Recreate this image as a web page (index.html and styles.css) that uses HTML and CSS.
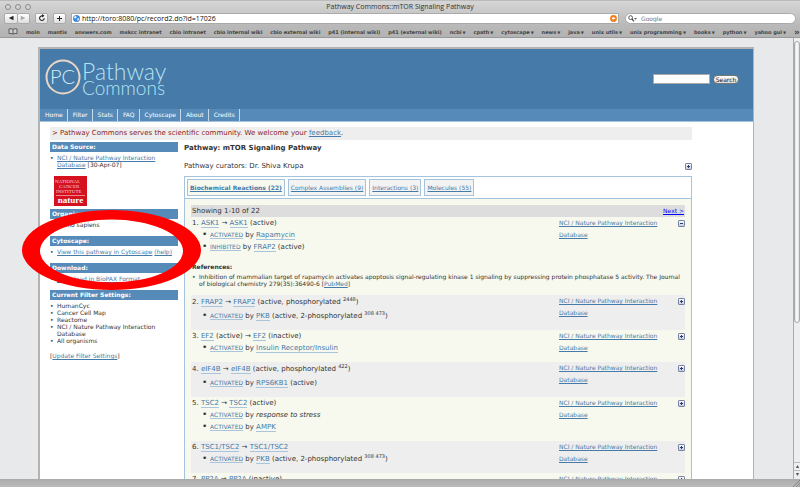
FILE: index.html
```html
<!DOCTYPE html>
<html lang="en">
<head>
<meta charset="utf-8">
<title>Pathway Commons::mTOR Signaling Pathway</title>
<link rel="stylesheet" href="styles.css">
</head>
<body>
<svg class="defs" width="0" height="0" aria-hidden="true">
  <defs>
    <linearGradient id="box-fill" x1="0" y1="0" x2="0" y2="1"><stop offset="0" stop-color="#fff"/><stop offset="1" stop-color="#c3c9d6"/></linearGradient>
    <symbol id="plus" viewBox="0 0 7 7"><rect x=".5" y=".5" width="6" height="6" rx=".6" fill="url(#box-fill)" stroke="#7480a3"/><path d="M2 3.5h3M3.5 2v3" stroke="#2c3c6c"/></symbol>
    <symbol id="minus" viewBox="0 0 7 7"><rect x=".5" y=".5" width="6" height="6" rx=".6" fill="url(#box-fill)" stroke="#7480a3"/><path d="M2 3.5h3" stroke="#2c3c6c"/></symbol>
  </defs>
</svg>
<header class="chrome">
  <div class="titlebar">
    <div class="lights"><i></i><i></i><i></i></div>
    <div class="window-title">Pathway Commons::mTOR Signaling Pathway</div>
    <div></div>
  </div>
  <div class="toolbar">
    <div class="btn-pair">
      <button class="tool" aria-label="Back"><svg width="6" height="6" viewBox="0 0 6 6"><path d="M5.5.8v4.4L.8 3z" fill="#222"/></svg></button><button class="tool" aria-label="Forward"><svg width="6" height="6" viewBox="0 0 6 6"><path d="M.8.8v4.4L5.2 3z" fill="#aaa"/></svg></button>
    </div>
    <button class="tool single" aria-label="Reload"><svg width="8" height="8" viewBox="0 0 8 8"><path d="M6.2 4.2A2.3 2.3 0 1 1 4.6 2" fill="none" stroke="#222" stroke-width="1.1"/><path d="M4 0l2.6 1.7L4.2 3.6z" fill="#222"/></svg></button>
    <button class="tool single" aria-label="Add bookmark"><svg width="7" height="7" viewBox="0 0 7 7"><path d="M1 3.5h5M3.5 1v5" stroke="#222"/></svg></button>
    <div class="address">
      <svg width="7" height="7" viewBox="0 0 7 7"><circle cx="3.5" cy="3.5" r="3.2" fill="#3b8be0" stroke="#2562ad" stroke-width=".5"/><path d="M1 1.8l2-1 .6 1.4-1.2 1.2L1 3zM4 3.6l1.800-.3.4 1.200L4.600 6z" fill="#dff1ff"/></svg>
      <input type="text" aria-label="Address" value="http://toro:8080/pc/record2.do?id=17026">
      <svg width="7" height="7" viewBox="0 0 7 7"><circle cx="3.5" cy="3.5" r="3.4" fill="#ef7d1a"/><path d="M3.6 1.6L1.6 3.4l2 1.7V4h1.6V2.8H3.6z" fill="#fff"/></svg>
    </div>
    <div class="google">
      <svg width="9" height="7" viewBox="0 0 9 7"><circle cx="2.6" cy="2.6" r="1.9" fill="none" stroke="#444" stroke-width=".9"/><path d="M4 4l2 2.4" stroke="#444" stroke-width="1.2"/><path d="M6 3h3L7.5 4.8z" fill="#555"/></svg>
      <input type="text" aria-label="Google search" placeholder="Google">
    </div>
  </div>
  <nav class="bookmarks" aria-label="Bookmarks">
    <svg width="10" height="7" viewBox="0 0 10 7"><path d="M5 1.5C4 .6 2 .6 1 1v4.600c1-.3 3-.3 4 .5 1-.8 3-.8 4-.5V1C8 .6 6 .6 5 1.5zM5 1.5V6" fill="#ccc" stroke="#444" stroke-width=".8"/></svg>
    <a href="#">moin</a><a href="#">mantis</a><a href="#">answers.com</a><a href="#">mskcc intranet</a><a href="#">cbio intranet</a><a href="#">cbio internal wiki</a><a href="#">cbio external wiki</a><a href="#">p41 (internal wiki)</a><a href="#">p41 (external wiki)</a><a href="#" class="menu">ncbi</a><a href="#" class="menu">cpath</a><a href="#" class="menu">cytoscape</a><a href="#" class="menu">news</a><a href="#" class="menu">java</a><a href="#" class="menu">unix utils</a><a href="#" class="menu">unix programming</a><a href="#" class="menu">books</a><a href="#" class="menu">python</a><a href="#" class="menu">yahoo gui</a><a href="#" class="more">»</a>
  </nav>
</header>

<div class="view">
  <div class="canvas">
    <div class="page">
      <div class="banner">
        <svg class="logo" width="132" height="44" viewBox="0 0 132 44" role="img" aria-label="Pathway Commons">
          <circle cx="18" cy="20" r="16.5" fill="none" stroke="#ead6c6" stroke-width="2"/>
          <text x="5" y="27" class="logo-pc">PC</text>
          <text x="37" y="23" class="logo-top">Pathway</text>
          <text x="37" y="38" class="logo-bottom">Commons</text>
        </svg>
        <form class="search"><input type="text" aria-label="Search terms"><button type="button">Search</button></form>
      </div>
      <nav class="nav" aria-label="Main"><a href="#">Home</a><a href="#">Filter</a><a href="#">Stats</a><a href="#">FAQ</a><a href="#">Cytoscape</a><a href="#">About</a><a href="#">Credits</a></nav>
      <div class="content">
        <p class="notice">&gt; Pathway Commons serves the scientific community. We welcome your <a href="#">feedback</a>.</p>
        <div class="columns">
          <aside class="side">
            <h2>Data Source:</h2>
            <ul><li><a href="#">NCI / Nature Pathway Interaction Database</a> [30-Apr-07]</li></ul>
            <svg class="nci" width="33" height="30" viewBox="0 0 33 30" role="img" aria-label="National Cancer Institute, Nature">
              <rect width="33" height="30" fill="#d5101f"/>
              <text x="1" y="7" class="nci-line">NATIONAL</text>
              <text x="5" y="12" class="nci-line">CANCER</text>
              <text x="2" y="17" class="nci-line">INSTITUTE</text>
              <path d="M2 19.5h29" stroke="#f6b9bd" stroke-width=".7"/>
              <text x="16.5" y="27" text-anchor="middle" class="nci-nature">nature</text>
            </svg>
            <h2>Organism:</h2>
            <ul><li>Homo sapiens</li></ul>
            <h2>Cytoscape:</h2>
            <ul><li><a href="#">View this pathway in Cytoscape</a> <a href="#">(help)</a></li></ul>
            <h2>Download:</h2>
            <ul><li><a href="#">Download in BioPAX Format</a></li></ul>
            <h2>Current Filter Settings:</h2>
            <ul><li>HumanCyc</li><li>Cancer Cell Map</li><li>Reactome</li><li>NCI / Nature Pathway Interaction Database</li><li>All organisms</li></ul>
            <p>[<a href="#">Update Filter Settings</a>]</p>
          </aside>
          <main class="main">
            <h1>Pathway: mTOR Signaling Pathway</h1>
            <div class="curators"><span>Pathway curators: Dr. Shiva Krupa</span><button class="toggle" aria-label="Show details"><svg width="7" height="7"><use href="#plus"/></svg></button></div>
            <div class="panel">
              <div class="tabs"><a href="#" class="on">Biochemical Reactions (22)</a><a href="#">Complex Assemblies (9)</a><a href="#">Interactions (3)</a><a href="#">Molecules (55)</a></div>
              <div class="results">
                <div class="showing"><span>Showing 1-10 of 22</span><a href="#">Next &gt;</a></div>
                <table>
                  <tbody>
                    <tr><td class="what"><p>1. <a href="#">ASK1</a> → <a href="#">ASK1</a> (active)</p>
                      <ul><li><a href="#" class="act">ACTIVATED</a> by <a href="#">Rapamycin</a></li><li><a href="#" class="act">INHIBITED</a> by <a href="#">FRAP2</a> (active)</li></ul></td>
                      <td class="source"><a href="#">NCI / Nature Pathway Interaction Database</a></td>
                      <td class="more-cell"><button class="toggle" aria-label="Hide details"><svg width="7" height="7"><use href="#minus"/></svg></button></td></tr>
                    <tr><td colspan="3" class="refs"><h3>References:</h3>
                      <ul><li>Inhibition of mammalian target of rapamycin activates apoptosis signal-regulating kinase 1 signaling by suppressing protein phosphatase 5 activity. The Journal of biological chemistry 279(35):36490-6 [<a href="#">PubMed</a>]</li></ul></td></tr>
                  </tbody>
                  <tbody class="alt">
                    <tr><td class="what"><p class="raised">2. <a href="#">FRAP2</a> → <a href="#">FRAP2</a> (active, phosphorylated <sup>2448</sup>)</p>
                      <ul><li><a href="#" class="act">ACTIVATED</a> by <a href="#">PKB</a> (active, 2-phosphorylated <sup>308 473</sup>)</li></ul></td>
                      <td class="source"><a href="#">NCI / Nature Pathway Interaction Database</a></td>
                      <td class="more-cell"><button class="toggle" aria-label="Show details"><svg width="7" height="7"><use href="#plus"/></svg></button></td></tr>
                  </tbody>
                  <tbody>
                    <tr><td class="what"><p>3. <a href="#">EF2</a> (active) → <a href="#">EF2</a> (inactive)</p>
                      <ul><li><a href="#" class="act">ACTIVATED</a> by <a href="#">Insulin Receptor/Insulin</a></li></ul></td>
                      <td class="source"><a href="#">NCI / Nature Pathway Interaction Database</a></td>
                      <td class="more-cell"><button class="toggle" aria-label="Show details"><svg width="7" height="7"><use href="#plus"/></svg></button></td></tr>
                  </tbody>
                  <tbody class="alt">
                    <tr><td class="what"><p class="raised">4. <a href="#">eIF4B</a> → <a href="#">eIF4B</a> (active, phosphorylated <sup>422</sup>)</p>
                      <ul><li><a href="#" class="act">ACTIVATED</a> by <a href="#">RPS6KB1</a> (active)</li></ul></td>
                      <td class="source"><a href="#">NCI / Nature Pathway Interaction Database</a></td>
                      <td class="more-cell"><button class="toggle" aria-label="Show details"><svg width="7" height="7"><use href="#plus"/></svg></button></td></tr>
                  </tbody>
                  <tbody>
                    <tr><td class="what"><p>5. <a href="#">TSC2</a> → <a href="#">TSC2</a> (active)</p>
                      <ul><li><a href="#" class="act">ACTIVATED</a> by <em>response to stress</em></li><li><a href="#" class="act">ACTIVATED</a> by <a href="#">AMPK</a></li></ul></td>
                      <td class="source"><a href="#">NCI / Nature Pathway Interaction Database</a></td>
                      <td class="more-cell"><button class="toggle" aria-label="Show details"><svg width="7" height="7"><use href="#plus"/></svg></button></td></tr>
                  </tbody>
                  <tbody class="alt">
                    <tr><td class="what"><p>6. <a href="#">TSC1/TSC2</a> → <a href="#">TSC1/TSC2</a></p>
                      <ul><li><a href="#" class="act">ACTIVATED</a> by <a href="#">PKB</a> (active, 2-phosphorylated <sup>308 473</sup>)</li></ul></td>
                      <td class="source"><a href="#">NCI / Nature Pathway Interaction Database</a></td>
                      <td class="more-cell"><button class="toggle" aria-label="Show details"><svg width="7" height="7"><use href="#plus"/></svg></button></td></tr>
                  </tbody>
                  <tbody>
                    <tr><td class="what"><p>7. <a href="#">PP2A</a> → <a href="#">PP2A</a> (inactive)</p></td>
                      <td class="source"><a href="#">NCI / Nature Pathway Interaction Database</a></td>
                      <td class="more-cell"><button class="toggle" aria-label="Show details"><svg width="7" height="7"><use href="#plus"/></svg></button></td></tr>
                  </tbody>
                </table>
              </div>
            </div>
          </main>
        </div>
      </div>
      <svg class="ring" width="179" height="80" viewBox="0 0 179 80" aria-hidden="true"><path fill="#f00" fill-rule="evenodd" d="M0 40a89.5 40 0 1 0 179 0a89.5 40 0 1 0-179 0zM18 41a71.5 31.5 0 1 0 143 0a71.5 31.5 0 1 0-143 0z"/></svg>
    </div>
  </div>
  <div class="scroll">
    <div class="thumb"></div>
    <div class="arrows"><svg width="7" height="17" viewBox="0 0 7 17"><path d="M0 .5h7M0 8.5h7" stroke="#bbb"/><path d="M3.5 3l1.600 3H1.900zM3.5 14l1.600-3H1.900z" fill="#555"/></svg></div>
  </div>
</div>
<footer class="status"><svg width="7" height="7" viewBox="0 0 7 7"><path d="M0 7L7 0M3 7l4-4M5.5 7L7 5.5" stroke="#777" stroke-width=".8"/></svg></footer>
</body>
</html>
```
FILE: styles.css
```css
* { box-sizing: border-box; }
body {
  margin: 0;
  height: 100vh;
  display: flex;
  flex-direction: column;
  overflow: hidden;
  background: #b8b8b8;
  font: 7px/12px "DejaVu Sans", sans-serif;
  color: #333;
}
p, ul, h1, h2, h3 { margin: 0; padding: 0; }
ul { list-style: none; }
a { color: #467aa8; }
svg { display: block; flex: none; }
button { padding: 0; border: 0; background: none; font: inherit; }
input { min-width: 0; padding: 0; border: 0; background: none; font: inherit; outline: 0; }
.defs { position: absolute; }

/* Browser window */
.chrome { flex: none; background: linear-gradient(#d6d6d6, #b9b9b9 66%, #b2b2b2); border-top: 1px solid #bbb; }
.titlebar { display: grid; grid-template-columns: 1fr auto 1fr; height: 11px; align-items: center; }
.lights { display: flex; gap: 4px; padding-left: 5px; }
.lights i { width: 6px; height: 6px; border: 1px solid #8a8a8a; border-radius: 50%; background: #d5d5d5; }
.window-title { font: 7px/10px "Open Sans", sans-serif; color: #333; }
.toolbar { display: flex; align-items: center; height: 12px; padding: 0 4px; }
.btn-pair { display: flex; width: 26px; margin-right: 5px; }
.tool { display: flex; align-items: center; justify-content: center; flex: 1; height: 11px; background: linear-gradient(#fff, #dedede); border: 1px solid #aaa; border-radius: 2px; }
.btn-pair .tool + .tool { border-left: 0; }
.single { flex: none; width: 13px; margin-right: 5px; }
.address, .google { display: flex; align-items: center; height: 11px; background: #fff; border: 1px solid #aaa; }
.address { flex: 1; gap: 2px; padding: 0 1px; margin-right: 6px; }
.address input { flex: 1; font: 7px/9px "Open Sans", sans-serif; color: #111; }
.google { width: 171px; gap: 4px; padding: 0 2px; border-radius: 6px; }
.google input { flex: 1; font: 6px/9px "DejaVu Sans", sans-serif; }
.google input::placeholder { color: #777; }
.bookmarks { display: flex; align-items: center; justify-content: space-between; height: 14px; padding: 2px 0 0 8px; border-bottom: 1px solid #999; font: bold 5px/12px "DejaVu Sans", sans-serif; white-space: nowrap; }
.bookmarks a { color: #444; text-decoration: none; }
.menu::after { content: "▼"; font-size: 4px; line-height: 0; margin-left: 1px; }
.bookmarks .more { font-size: 9px; }
.view { flex: 1; min-height: 0; display: flex; }
.canvas { flex: 1; min-width: 0; overflow: hidden; padding: 9px 39px 0 38px; background: #e8e9eb; }
.scroll { flex: none; width: 7px; display: flex; flex-direction: column; justify-content: space-between; background: #eee; border-left: 1px solid #aaa; }
.thumb { height: 64%; margin-top: 3px; border: 1px solid #aaa; border-radius: 4px; background: linear-gradient(90deg, #ddd, #fff, #ddd); }
.status { flex: none; display: flex; justify-content: flex-end; align-items: flex-end; height: 8px; background: linear-gradient(#aaa, #bbb); }

/* Site */
.page { position: relative; min-height: 100%; background: #fff; border: solid #b3b3b3; border-width: 2px 1px 0 2px; }
.banner { display: flex; justify-content: space-between; align-items: center; height: 60px; padding: 0 14px 0 5px; background: #467aa8; }
.logo { font-family: Lato, sans-serif; font-weight: 300; fill: #b5e3f4; }
.logo-pc { font-size: 20px; fill: #d5eef8; }
.logo-top { font-size: 23px; }
.logo-bottom { font-size: 19px; }
.search { display: flex; gap: 3px; align-items: center; }
.search input { width: 57px; height: 10px; background: #fff; border: 1px solid #aaa; }
.search button { height: 9px; width: 26px; border: 1px solid #777; border-radius: 5px; background: linear-gradient(#fff, #ddd); font: 6px/7px "DejaVu Sans", sans-serif; color: #111; }
.nav { display: flex; background: #568bb9; border-bottom: 1px solid #a5c3dc; font-size: 6px; }
.nav a { padding: 0 4px 0 5px; border-right: 1px solid #c5d9e8; color: #fff; text-decoration: none; }
.content { padding: 5px 61px 0 10px; }
.notice { background: #eee; padding: 0 2px; line-height: 13px; color: #8b1a1a; }
.columns { display: grid; grid-template-columns: 128px minmax(0, 1fr); gap: 6px; padding-top: 2px; }
.side { font-size: 6px; line-height: 7px; }
.side h2 { padding: 0 2px; background: #568bb9; color: #fff; font-size: 6px; line-height: 10px; }
.side ul { padding: 2px 4px 8px 7px; }
.side li::before, .what li::before, .refs li::before { content: "•"; display: inline-block; width: 7px; margin-left: -7px; }
.nci { margin: 0 0 3px 4px; }
.nci-line { font: 5px "Liberation Serif", serif; fill: #fbd4d6; }
.nci-nature { font: bold 9px "Liberation Serif", serif; fill: #fff; }
.main h1 { font-size: 7px; line-height: 12px; }
.curators { display: flex; justify-content: space-between; align-items: center; padding: 6px 0 4px; }
.panel { border: 1px solid #a5c3dc; }
.tabs { display: flex; gap: 3px; padding: 2px; border-bottom: 1px solid #a5c3dc; font-size: 6px; line-height: 15px; }
.tabs a { padding: 0 2px; border: 1px solid #a5c3dc; background: #f3f3f3; }
.tabs .on { font-weight: bold; background: #f7f8ee; }
.results { padding: 6px; background: #f7f8ee; }
.showing { display: flex; justify-content: space-between; padding: 0 1px; background: #ddd; }
.showing a { font-size: 6px; color: #00f; }
table { width: 100%; border-collapse: collapse; }
td { padding: 0; vertical-align: top; }
.alt { background: #eee; }
.what { padding: 0 0 8px 1px; }
.what a { text-decoration: none; border-bottom: 1px solid #a9c5dc; }
.what .act { font-size: 6px; }
.what ul { padding-left: 18px; }
.what li::before { width: 8px; margin-left: -8px; font-size: 9px; line-height: 0; }
.what p.raised { line-height: 15px; }
sup { font-size: 5px; line-height: 0; }
.source { width: 104px; font-size: 6px; }
.more-cell { width: 22px; }
.toggle { display: block; margin-left: auto; }
.more-cell .toggle { margin-top: 3px; }
.refs { padding: 0 0 8px 1px; font-size: 6px; line-height: 7px; }
.refs h3 { font-size: 6px; line-height: 12px; }
.refs ul { padding-left: 7px; }

/* Hand-drawn highlight over the sidebar */
.ring { position: absolute; left: -18px; top: 161px; }
```
